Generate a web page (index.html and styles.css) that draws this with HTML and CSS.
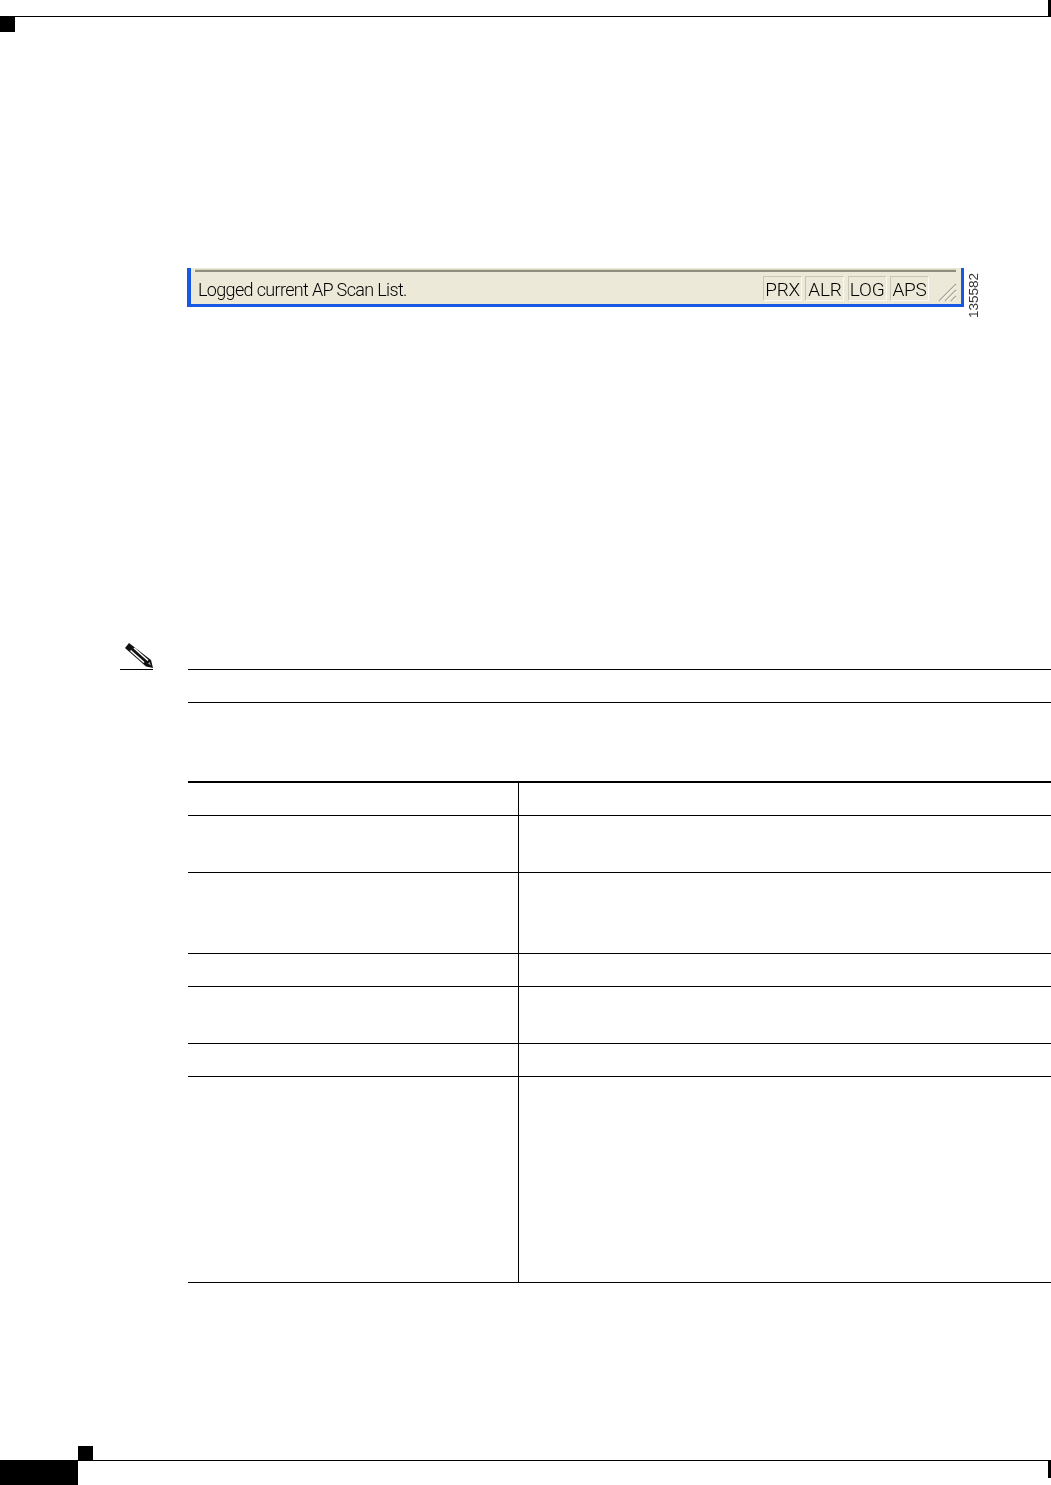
FILE: index.html
```html
<!DOCTYPE html>
<html lang="en">
<head>
<meta charset="utf-8">
<title>AP Scan List</title>
<link rel="stylesheet" href="styles.css">
</head>
<body>
<div class="page">
  <header class="top">
    <div class="top-rule"></div>
    <div class="top-mark"></div>
  </header>

  <main class="content">
    <figure class="figure">
      <div class="statusbar">
        <div class="statusbar-edge"></div>
        <div class="statusbar-row">
          <span class="status-text">Logged current AP Scan List.</span>
          <div class="panels">
            <span class="panel">PRX</span>
            <span class="panel">ALR</span>
            <span class="panel">LOG</span>
            <span class="panel">APS</span>
          </div>
          <svg class="grip" width="19" height="19" viewBox="0 0 19 19" aria-hidden="true">
            <path d="M1 18 18 1M7 18 18 7M13 18 18 13" fill="none" stroke="#a8a594" stroke-width="1.3"/>
            <path d="M2.5 18 18 2.5M8.500 18 18 8.500M14.500 18 18 14.500" fill="none" stroke="#fff" stroke-width="1"/>
          </svg>
        </div>
      </div>
      <span class="figure-id">135582</span>
    </figure>

    <section class="note">
      <div class="note-icon">
        <svg width="30" height="26" viewBox="0 0 30 26" aria-hidden="true">
          <path d="M5 0 1 5 22 23.500 29 25 27 17Z" fill="#111"/>
          <path d="M10 5 24 17.500M6.500 7.500 20 19.500" fill="none" stroke="#fff" stroke-width="1.600"/>
          <path d="M24 20.500 25.500 19 27 22.500Z" fill="#aaa"/>
        </svg>
      </div>
      <div class="note-body"></div>
    </section>

    <table class="data">
      <colgroup><col class="col-a"><col class="col-b"></colgroup>
      <tbody>
        <tr class="h-33"><td></td><td></td></tr>
        <tr class="h-57"><td></td><td></td></tr>
        <tr class="h-81"><td></td><td></td></tr>
        <tr class="h-33"><td></td><td></td></tr>
        <tr class="h-57"><td></td><td></td></tr>
        <tr class="h-33"><td></td><td></td></tr>
        <tr class="h-206"><td></td><td></td></tr>
      </tbody>
    </table>
  </main>

  <footer class="bottom">
    <div class="bottom-mark"></div>
    <div class="bottom-bar">
      <div class="page-tab"></div>
      <div class="bottom-rule"></div>
    </div>
  </footer>
</div>
</body>
</html>
```
FILE: styles.css
```css
* { box-sizing: border-box; }
html, body { margin: 0; padding: 0; background: #fff; }
.page {
  width: 1051px;
  height: 1485px;
  display: flex;
  flex-direction: column;
  overflow: hidden;
  font-family: "Liberation Sans", Arial, sans-serif;
}

.top { height: 32px; }
.top-rule {
  height: 17px;
  border-bottom: 1px solid #000;
  border-right: 3px solid #000;
}
.top-mark { width: 15px; height: 15px; background: #000; }

.content {
  flex: 1;
  padding: 236px 0 0 187px;
}

.figure {
  margin: 0;
  display: flex;
  align-items: flex-start;
  gap: 3px;
}
.statusbar {
  width: 777px;
  height: 39px;
  background: #ece9d8;
  border-left: 4px solid #1657e4;
  border-right: 3px solid #1657e4;
  border-bottom: 3px solid #1657e4;
  padding-top: 1px;
}
.statusbar-edge {
  height: 3px;
  margin: 0 5px 0 4px;
  background: #8f8d7b;
  border-top: 1px solid #d6d3c0;
}
.statusbar-row {
  display: flex;
  align-items: flex-start;
  padding: 4px 4px 0 7px;
}
.status-text {
  flex: 1;
  margin-top: 1px;
  font-family: Roboto, "Liberation Sans", sans-serif;
  font-weight: 300;
  font-size: 18px;
  line-height: 26px;
  letter-spacing: -0.66px;
  color: #000;
  filter: blur(0.35px);
}
.panels { display: flex; gap: 3.300px; margin-right: 9px; }
.panel {
  width: 39px;
  height: 25px;
  border: 1px solid #c9c6b4;
  border-right-color: #fbfaf3;
  border-bottom-color: #fbfaf3;
  font-family: Roboto, "Liberation Sans", sans-serif;
  font-weight: 300;
  font-size: 19px;
  line-height: 25px;
  letter-spacing: -0.2px;
  text-align: center;
  color: #000;
  white-space: nowrap;
  filter: blur(0.35px);
}
.grip { margin-top: 7px; }
.figure-id {
  writing-mode: vertical-rl;
  transform: rotate(180deg);
  height: 45px;
  margin-top: 5px;
  font-size: 13.500px;
  line-height: 13px;
  color: #333;
  text-align: left;
  filter: blur(0.3px);
}

.note {
  margin: 351px 0 0 -67px;
  display: flex;
  align-items: flex-start;
}
.note-icon {
  width: 33px;
  height: 33px;
  margin-top: -26px;
  padding-left: 4px;
  line-height: 0;
  flex: none;
}
.note-icon::after {
  content: "";
  display: block;
  width: 33px;
  height: 1px;
  margin: 0 0 0 -4px;
  background: #000;
}
.note-body {
  flex: 1;
  height: 34px;
  margin-left: 35px;
  border-top: 1px solid #000;
  border-bottom: 1px solid #000;
}

.data {
  width: 863px;
  margin: 78px 0 0 1px;
  border-collapse: separate;
  border-spacing: 0;
  table-layout: fixed;
  border-top: 2px solid #000;
}
.col-a { width: 331px; }
.col-b { width: 532px; }
.data td {
  padding: 0;
  border-bottom: 1px solid #000;
}
.data td:first-child { border-right: 1px solid #000; }
.h-33 { height: 33px; }
.h-57 { height: 57px; }
.h-81 { height: 81px; }
.h-206 { height: 206px; }

.bottom { height: 39px; flex: none; }
.bottom-mark { width: 15px; height: 14px; margin-left: 78px; background: #000; }
.bottom-bar { display: flex; height: 25px; }
.page-tab { width: 78px; background: #000; }
.bottom-rule {
  flex: 1;
  height: 18px;
  border-top: 1px solid #000;
  border-right: 3px solid #000;
}
```
